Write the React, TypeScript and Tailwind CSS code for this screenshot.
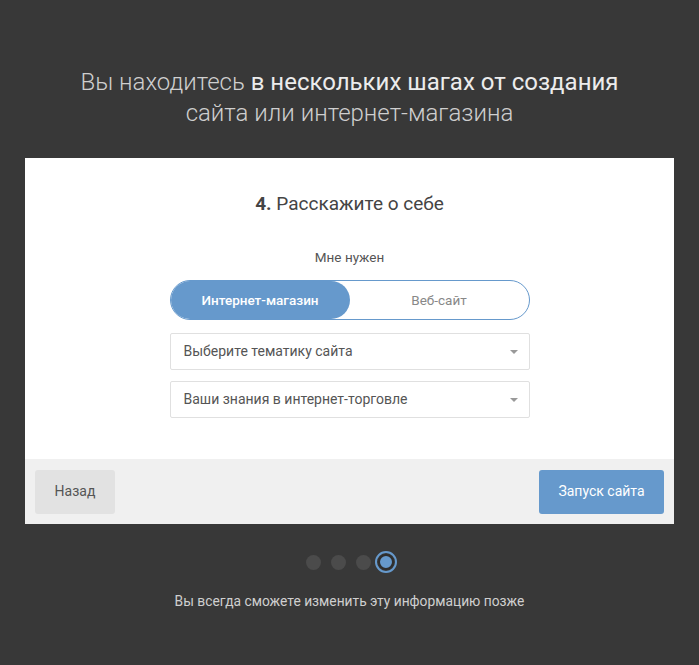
import { useState } from "react";

function Select({ label }: { label: string }) {
  return (
    <div className="flex h-[37px] w-[360px] items-center justify-between rounded-[2px] border border-[#e0e0e0] bg-white pl-[13px] pr-[11px] text-[14px] text-[#555]">
      <span>{label}</span>
      <span className="h-0 w-0 border-x-[4px] border-t-[4px] border-x-transparent border-t-[#999]" />
    </div>
  );
}

export default function App() {
  const [kind, setKind] = useState<"shop" | "site">("shop");

  return (
    <div className="flex min-h-[665px] flex-col items-center bg-[#383838] pt-[67px] font-['Roboto',sans-serif]">
      <h1 className="text-center text-[24px] font-light leading-[31px] text-[#cfcfcf]">
        Вы находитесь <span className="font-normal text-[#ececec]">в нескольких шагах от создания</span>
        <br />
        сайта или интернет-магазина
      </h1>

      <div className="mt-[29px] w-[649px] bg-white">
        <div className="flex flex-col items-center pb-[41px] pt-[33px]">
          <h2 className="text-[19px] leading-[26px] text-[#444]">
            <span className="font-bold">4.</span> Расскажите о себе
          </h2>
          <p className="mt-[30px] text-[13.5px] text-[#555]">Мне нужен</p>
          <div className="mt-[13px] flex h-[40px] w-[360px] rounded-full border border-[#6699cc] text-[13.5px]">
            <button
              onClick={() => setKind("shop")}
              className={`flex-1 rounded-full font-medium ${kind === "shop" ? "bg-[#6699cc] text-white" : "text-[#888]"}`}
            >
              Интернет-магазин
            </button>
            <button
              onClick={() => setKind("site")}
              className={`flex-1 rounded-full ${kind === "site" ? "bg-[#6699cc] font-medium text-white" : "text-[#888]"}`}
            >
              Веб-сайт
            </button>
          </div>
          <div className="mt-[13px] flex flex-col gap-[11px]">
            <Select label="Выберите тематику сайта" />
            <Select label="Ваши знания в интернет-торговле" />
          </div>
        </div>
        <div className="flex h-[65px] items-center justify-between bg-[#f0f0f0] px-[10px]">
          <button className="h-[44px] w-[80px] rounded-[3px] bg-[#e2e2e2] text-[14px] text-[#555]">Назад</button>
          <button className="h-[44px] w-[125px] rounded-[3px] bg-[#6699cc] text-[14px] text-white">Запуск сайта</button>
        </div>
      </div>

      <div className="mt-[27px] flex items-center gap-[10px] pl-[4px]">
        <span className="h-[15px] w-[15px] rounded-full bg-[#4b4b4b]" />
        <span className="h-[15px] w-[15px] rounded-full bg-[#4b4b4b]" />
        <span className="h-[15px] w-[15px] rounded-full bg-[#4b4b4b]" />
        <span className="-ml-[6px] flex h-[22px] w-[22px] items-center justify-center rounded-full border-2 border-[#6699cc]">
          <span className="h-[16px] w-[16px] rounded-full border-2 border-[#2e2e2e] bg-[#6699cc]" />
        </span>
      </div>

      <p className="mt-[18px] text-[13.8px] text-[#cfcfcf]">Вы всегда сможете изменить эту информацию позже</p>
    </div>
  );
}
